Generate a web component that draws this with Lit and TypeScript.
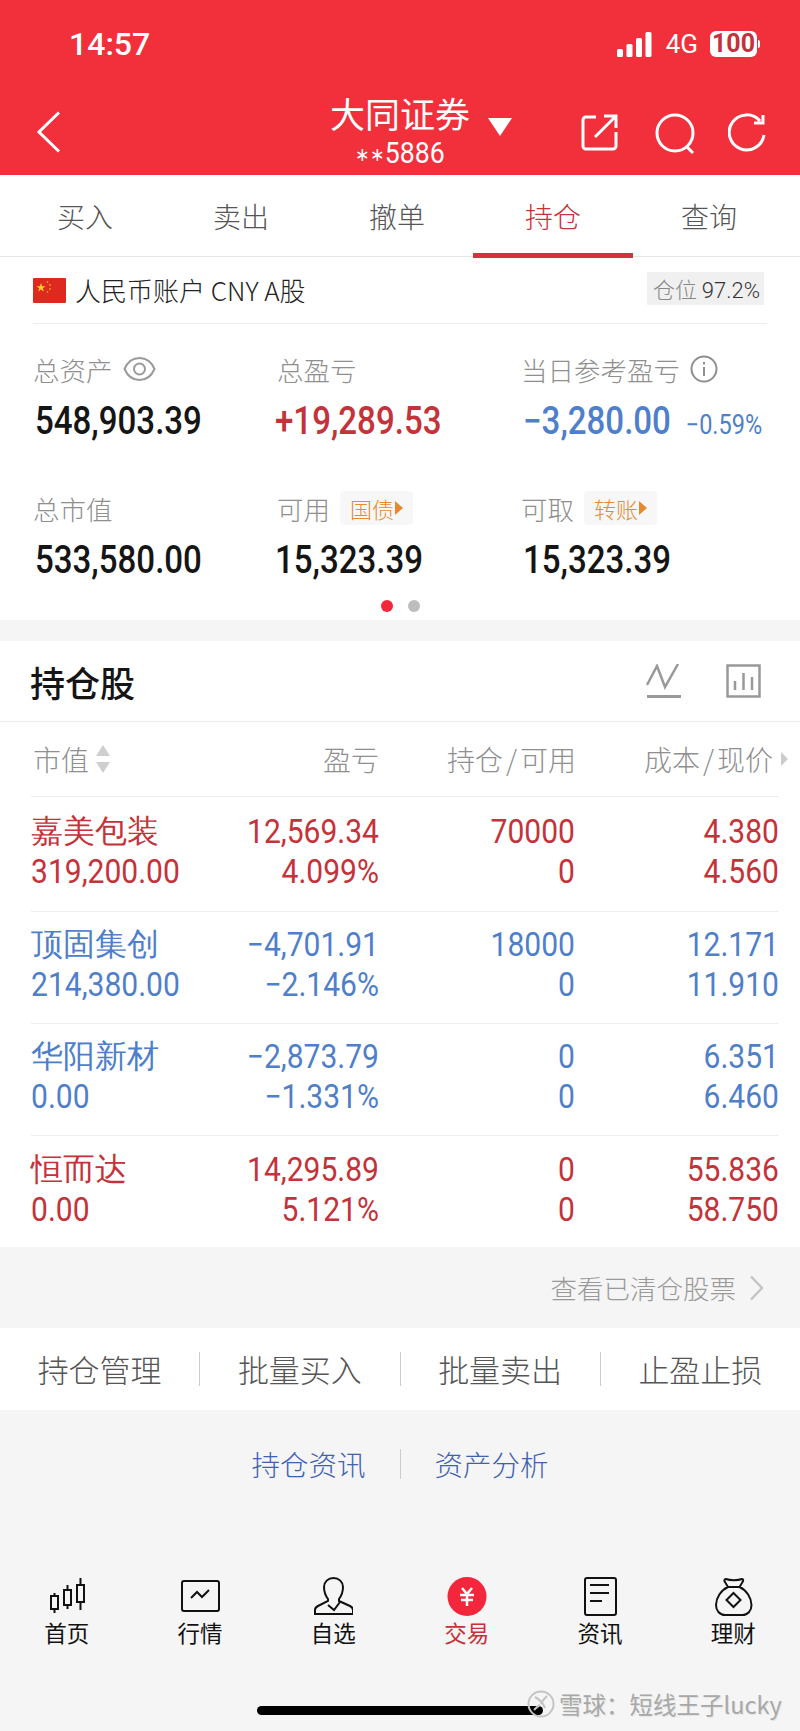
import { LitElement, html, css, svg } from 'lit';
import { customElement } from 'lit/decorators.js';

const tabs = ['买入', '卖出', '撤单', '持仓', '查询'];

const rows = [
  { c: 'up', name: '嘉美包装', mv: '319,200.00', pl: '12,569.34', pct: '4.099%', pos: '70000', avail: '0', cost: '4.380', now: '4.560' },
  { c: 'down', name: '顶固集创', mv: '214,380.00', pl: '−4,701.91', pct: '−2.146%', pos: '18000', avail: '0', cost: '12.171', now: '11.910' },
  { c: 'down', name: '华阳新材', mv: '0.00', pl: '−2,873.79', pct: '−1.331%', pos: '0', avail: '0', cost: '6.351', now: '6.460' },
  { c: 'up', name: '恒而达', mv: '0.00', pl: '14,295.89', pct: '5.121%', pos: '0', avail: '0', cost: '55.836', now: '58.750' },
];

const navIcons = [
  svg`<g fill="none" stroke="#111" stroke-width="2"><rect x="4" y="19" width="7" height="13" /><path d="M7.500 16v3M7.500 32v4" /><rect x="17" y="13" width="7" height="15" /><path d="M20.500 8v5M20.500 28v4" /><rect x="30" y="8" width="7" height="17" /><path d="M33.500 1v7M33.500 25v8" /></g>`,
  svg`<g fill="none" stroke="#111" stroke-width="2"><rect x="2" y="4" width="37" height="30" rx="2" /><path d="M11 21l6-6 5 5 7-7" /></g>`,
  svg`<g fill="none" stroke="#111" stroke-width="2"><path d="M15 22c-3-4-4-8-4-12 0-5 4-9 9.500-9s9.500 4 9.500 9c0 4-1 8-4 12v2l11 5c2 1 3 2 3 4v4H2v-4c0-2 1-3 3-4l10-5z" /><path d="M15 28l6 5 6-8" /></g>`,
  svg`<circle cx="20" cy="19.500" r="19.500" fill="#f3263c" /><g fill="none" stroke="#fff" stroke-width="2.500"><path d="M15 11l5 6 5-6M13 18h14M14 23h12M20 17v12" /></g>`,
  svg`<g fill="none" stroke="#111" stroke-width="2"><rect x="5" y="1" width="31" height="37" rx="2" /><path d="M10 8h19M10 16h19M10 24h12" /></g>`,
  svg`<g fill="none" stroke="#111" stroke-width="2"><path d="M13 2c4 1.500 12 1.500 16 0 1.500 0 1.500 2 .5 3l-3 5c7 3 12 11 12 18 0 6-4 10-9 10H12c-5 0-9-4-9-10 0-7 5-15 12-18l-3-5c-1-1-1-3 1-3z" /><path d="M15 10h12" /><path d="M20.500 16l7 7-7 7-7-7z" /></g>`,
];

const navLabels = ['首页', '行情', '自选', '交易', '资讯', '理财'];

@customElement('app-root')
export class AppRoot extends LitElement {
  static styles = css`
    :host {
      display: block;
      position: relative;
      min-height: 1731px;
      background: #f5f5f5;
      font-family: 'Noto Sans CJK SC', 'Noto Sans', sans-serif;
      color: #222;
      overflow: hidden;
    }
    .num {
      font-family: Roboto, 'Liberation Sans', sans-serif;
    }
    .up { color: #c4323a; }
    .down { color: #4f7fcb; }

    .head {
      background: #f1303c;
      height: 175px;
      color: #fff;
    }
    .status {
      height: 88px;
      display: flex;
      align-items: center;
      padding: 0 40px 0 69px;
      box-sizing: border-box;
    }
    .clock {
      font-family: Roboto, sans-serif;
      font-size: 32px;
      font-weight: 500;
      flex: 1;
    }
    .net {
      font-family: Roboto, sans-serif;
      font-size: 26px;
      margin: 0 12px 0 14px;
    }
    .batt {
      font-family: Roboto, sans-serif;
      font-size: 25px;
      font-weight: 700;
      line-height: 26px;
      height: 26px;
      width: 47px;
      text-align: center;
      background: #fff;
      color: #c4303c;
      border-radius: 6px;
    }
    .batt-tip {
      width: 2px;
      height: 8px;
      background: #fff;
      margin-left: 1px;
      border-radius: 0 2px 2px 0;
    }
    .nav {
      height: 87px;
      display: flex;
      align-items: flex-start;
      position: relative;
    }
    .back {
      margin: 23px 0 0 36px;
    }
    .title {
      position: absolute;
      left: 0;
      right: 0;
      top: 2px;
      text-align: center;
      line-height: 1;
    }
    .title b {
      display: block;
      font-weight: 400;
      font-size: 35px;
      height: 46px;
      line-height: 46px;
    }
    .acc {
      display: block;
      font-size: 29px;
      line-height: 28px;
      margin-top: 3px;
      transform: scaleX(0.92);
    }
    .acc i {
      font-style: normal;
      font-size: 19px;
      vertical-align: 2px;
    }
    .tri {
      position: absolute;
      left: 488px;
      top: 30px;
    }
    .actions {
      margin-left: auto;
      display: flex;
      gap: 31px;
      padding: 25px 34px 0 0;
    }
    .actions svg:first-child {
      margin-right: 6px;
    }

    .tabs {
      height: 82px;
      background: #fff;
      display: grid;
      grid-template-columns: repeat(5, 156px);
      padding-left: 7px;
      border-bottom: 1px solid #e6e6e6;
      box-sizing: border-box;
    }
    .tab {
      text-align: center;
      font-size: 28px;
      line-height: 82px;
      color: #555;
      position: relative;
      font-weight: 300;
    }
    .tab.on {
      color: #c4323a;
    }
    .tab.on::after {
      content: '';
      position: absolute;
      left: -2px;
      right: -2px;
      bottom: -1px;
      height: 5px;
      background: #d0343c;
    }

    .assets {
      background: #fff;
      height: 363px;
      padding: 0 33px;
      box-sizing: border-box;
    }
    .acct {
      height: 66px;
      display: flex;
      align-items: center;
      border-bottom: 1px solid #eee;
      font-size: 26px;
      color: #222;
      font-weight: 300;
    }
    .flag {
      margin-right: 9px;
      display: block;
    }
    .acct-name {
      flex: 1;
      margin-top: -2px;
    }
    .ratio {
      background: #f0f0f0;
      font-size: 22px;
      height: 33px;
      line-height: 33px;
      padding: 0 4px 0 6px;
      color: #888;
      margin: -4px 3px 0 0;
    }
    .ratio span {
      color: #333;
      font-family: Roboto, sans-serif;
    }
    .stats {
      display: grid;
      grid-template-columns: 244px 244px 1fr;
      grid-template-rows: 139px 112px;
      padding-top: 25px;
    }
    .label {
      display: flex;
      align-items: center;
      gap: 10px;
      height: 40px;
      font-size: 26.500px;
      color: #8f8f8f;
      font-weight: 300;
    }
    .value {
      font-size: 38px;
      font-weight: 500;
      line-height: 40px;
      margin-top: 12px;
      color: #151515;
      white-space: nowrap;
      transform: scaleX(0.87);
      transform-origin: 0 50%;
    }
    .stats > div:nth-child(3n + 1) .value,
    .stats > div:nth-child(3n) .value {
      margin-left: 2px;
    }
    .stats > div:nth-child(3n + 2) .value {
      margin-left: -2px;
    }
    .value.up { color: #c4323a; }
    .value.down { color: #4f7fcb; }
    .value small {
      font-size: 27px;
      font-weight: 400;
      margin-left: 17px;
    }
    .tag {
      background: #f7f7f7;
      color: #e58a2e;
      font-size: 22px;
      height: 34px;
      line-height: 34px;
      padding: 0 10px;
      border-radius: 4px;
      display: flex;
      align-items: center;
      gap: 1px;
    }
    .tag::after {
      content: '';
      border-left: 8px solid #e58a2e;
      border-top: 7px solid transparent;
      border-bottom: 7px solid transparent;
    }
    .dots {
      display: flex;
      justify-content: center;
      gap: 15px;
    }
    .dots i {
      width: 12px;
      height: 12px;
      border-radius: 50%;
      background: #bdbdbd;
    }
    .dots i.on {
      background: #f3263c;
    }

    .holdings {
      margin-top: 21px;
      background: #fff;
      height: 606px;
      overflow: hidden;
    }
    .hold-title {
      height: 81px;
      border-bottom: 1px solid #ececec;
      display: flex;
      align-items: center;
      padding: 0 39px 0 30px;
      box-sizing: border-box;
      gap: 44px;
    }
    .hold-title h2 {
      flex: 1;
      margin: 0;
      font-size: 35px;
      font-weight: 500;
      color: #151515;
    }
    .table {
      padding: 0 21px 0 31px;
    }
    .grid {
      display: grid;
      grid-template-columns: 190px 158px 196px 204px;
    }
    .thead {
      height: 74px;
      align-items: center;
      border-bottom: 1px solid #eee;
      font-size: 28px;
      color: #8f8f8f;
      font-weight: 300;
      padding-left: 2px;
      grid-template-columns: 188px 158px 197px 197px;
    }
    .thead > div {
      text-align: right;
      white-space: nowrap;
    }
    .thead > div:first-child {
      text-align: left;
      display: flex;
      align-items: center;
      gap: 6px;
    }
    .thead .more {
      position: relative;
    }
    .thead .more::after {
      content: '';
      position: absolute;
      right: -15px;
      top: 13px;
      border-left: 7px solid #ccc;
      border-top: 7px solid transparent;
      border-bottom: 7px solid transparent;
    }
    .sl {
      margin: 0 3px;
    }
    .sort {
      display: block;
    }
    .row {
      height: 112px;
      box-sizing: border-box;
      padding-bottom: 6px;
      border-bottom: 1px solid #eee;
      align-content: center;
      row-gap: 1px;
      font-size: 33px;
      line-height: 39px;
    }
    .thead + .row {
      height: 115px;
    }
    .row:last-child {
      border-bottom: 0;
    }
    .row > div {
      text-align: right;
      white-space: nowrap;
      transform: scaleX(0.91);
      transform-origin: 100% 50%;
    }
    .row > .name {
      text-align: left;
      font-size: 32px;
      font-weight: 300;
      transform: none;
    }
    .row > .left {
      text-align: left;
      transform-origin: 0 50%;
    }

    .cleared {
      height: 81px;
      display: flex;
      align-items: center;
      justify-content: flex-end;
      gap: 13px;
      padding-right: 36px;
      font-size: 26.500px;
      color: #999;
      font-weight: 300;
    }
    .tools {
      height: 82px;
      background: #fff;
      display: flex;
      align-items: center;
    }
    .tools div {
      flex: 1;
      text-align: center;
      font-size: 31px;
      line-height: 34px;
      color: #555;
      font-weight: 300;
      border-right: 1px solid #ccc;
    }
    .tools div:last-child {
      border-right: 0;
    }
    .links {
      height: 108px;
      display: flex;
      align-items: center;
      justify-content: center;
      font-size: 28.500px;
      color: #3f62b0;
      font-weight: 300;
    }
    .links span {
      padding: 0 34px;
      line-height: 30px;
    }
    .links span:first-child {
      border-right: 1px solid #ccc;
    }

    .bar {
      display: grid;
      grid-template-columns: repeat(6, 1fr);
      margin-top: 59px;
    }
    .bar div {
      display: flex;
      flex-direction: column;
      align-items: center;
      font-size: 22.500px;
      line-height: 30px;
      color: #111;
    }
    .bar svg {
      display: block;
    }
    .bar .on {
      color: #c4323a;
    }
    .home {
      position: absolute;
      left: 257px;
      top: 1706px;
      width: 286px;
      height: 9px;
      border-radius: 5px;
      background: #000;
    }
    .mark {
      position: absolute;
      left: 527px;
      top: 1689px;
      display: flex;
      align-items: center;
      gap: 4px;
      color: #a8a8a8;
      font-size: 23.500px;
      line-height: 30px;
      white-space: nowrap;
      text-shadow: 1px 1px 0 #e4e4e4;
    }
  `;

  renderStat(label: unknown, value: unknown, cls = '') {
    return html`<div>
      <div class="label">${label}</div>
      <div class="value num ${cls}">${value}</div>
    </div>`;
  }

  render() {
    return html`
      <div class="head">
        <div class="status">
          <div class="clock">14:57</div>
          <svg width="35" height="25" viewBox="0 0 35 25" fill="#fff">
            <rect x="0" y="17" width="6" height="8" rx="1.500" />
            <rect x="9.500" y="12" width="6" height="13" rx="1.500" />
            <rect x="19" y="6" width="6" height="19" rx="1.500" />
            <rect x="28.500" y="0" width="6" height="25" rx="1.500" />
          </svg>
          <span class="net">4G</span>
          <div class="batt">100</div>
          <div class="batt-tip"></div>
        </div>
        <div class="nav">
          <svg class="back" width="26" height="42" viewBox="0 0 26 42" fill="none" stroke="#fff" stroke-width="3">
            <path d="M23 1.500L3 21l20 19.500" />
          </svg>
          <div class="title">
            <b>大同证券</b>
            <span class="acc num"><i>∗∗</i>5886</span>
          </div>
          <svg class="tri" width="24" height="18" viewBox="0 0 24 18" fill="#fff"><path d="M0 0h24L12 18z" /></svg>
          <div class="actions">
            <svg width="37" height="38" viewBox="0 0 37 38" fill="none" stroke="#fff" stroke-width="3">
              <path d="M15 4H5a3 3 0 00-3 3v26a3 3 0 003 3h27a3 3 0 003-3V19" />
              <path d="M14 24L34 4M23 3h12v12" />
            </svg>
            <svg width="42" height="42" viewBox="0 0 42 42" fill="none" stroke="#fff" stroke-width="3">
              <circle cx="20" cy="20" r="18" />
              <path d="M31 33l7 7" />
            </svg>
            <svg width="38" height="40" viewBox="0 0 38 40" fill="none" stroke="#fff" stroke-width="3">
              <path d="M32 8A17.500 17.500 0 1036 22" />
              <path d="M35 2v8h-9" />
            </svg>
          </div>
        </div>
      </div>

      <div class="tabs">
        ${tabs.map((t) => html`<div class="tab ${t === '持仓' ? 'on' : ''}">${t}</div>`)}
      </div>

      <div class="assets">
        <div class="acct">
          <svg class="flag" width="33" height="25" viewBox="0 0 33 25">
            <rect width="33" height="25" rx="1" fill="#de2a1e" />
            <path d="M8 5l1.100 3.200h3.400l-2.700 2 1 3.300L8 11.500l-2.800 2 1-3.300-2.700-2h3.400z" fill="#f8d323" />
            <g fill="#f8d323"><circle cx="14.500" cy="4" r=".8" /><circle cx="17" cy="7" r=".8" /><circle cx="17" cy="11" r=".8" /><circle cx="14.500" cy="14" r=".8" /></g>
          </svg>
          <div class="acct-name">人民币账户 CNY A股</div>
          <div class="ratio">仓位 <span>97.2%</span></div>
        </div>
        <div class="stats">
          ${this.renderStat(html`总资产
            <svg width="33" height="26" viewBox="0 0 33 26" fill="none" stroke="#9a9a9a" stroke-width="2">
              <path d="M1.500 13C5 5 10 2 16.500 2s11.500 3 15 11c-3.500 8-8.500 11-15 11s-11.500-3-15-11z" /><circle cx="16.500" cy="13" r="5.500" />
            </svg>`, '548,903.39')}
          ${this.renderStat('总盈亏', '+19,289.53', 'up')}
          ${this.renderStat(html`当日参考盈亏
            <svg width="28" height="28" viewBox="0 0 28 28" fill="none" stroke="#8f8f8f" stroke-width="2">
              <circle cx="14" cy="14" r="12.500" /><path d="M14 12v9M14 7v2.500" />
            </svg>`, html`−3,280.00<small>−0.59%</small>`, 'down')}
          ${this.renderStat('总市值', '533,580.00')}
          ${this.renderStat(html`可用<span class="tag">国债</span>`, '15,323.39')}
          ${this.renderStat(html`可取<span class="tag">转账</span>`, '15,323.39')}
        </div>
        <div class="dots"><i class="on"></i><i></i></div>
      </div>

      <div class="holdings">
        <div class="hold-title">
          <h2>持仓股</h2>
          <svg width="36" height="34" viewBox="0 0 36 34" fill="none" stroke="#999" stroke-width="2.500">
            <path d="M1 21L11 2l8 21L32 0" /><path d="M1 32.500h34" stroke-width="3" />
          </svg>
          <svg width="35" height="34" viewBox="0 0 35 34" fill="none" stroke="#999" stroke-width="2.500">
            <rect x="1.500" y="1.500" width="32" height="31" /><path d="M9 26v-9M17.500 26V9M26 26V13" />
          </svg>
        </div>
        <div class="table">
          <div class="grid thead">
            <div>市值
              <svg class="sort" width="16" height="28" viewBox="0 0 16 28" fill="#cfcfcf"><path d="M8 0l7 11H1zM8 28L1 17h14z" /></svg>
            </div>
            <div>盈亏</div>
            <div>持仓<span class="sl">/</span>可用</div>
            <div><span class="more">成本<span class="sl">/</span>现价</span></div>
          </div>
          ${rows.map((r) => html`
            <div class="grid row num ${r.c}">
              <div class="name">${r.name}</div>
              <div>${r.pl}</div>
              <div>${r.pos}</div>
              <div>${r.cost}</div>
              <div class="left">${r.mv}</div>
              <div>${r.pct}</div>
              <div>${r.avail}</div>
              <div>${r.now}</div>
            </div>
          `)}
        </div>
      </div>

      <div class="cleared">
        查看已清仓股票
        <svg width="15" height="26" viewBox="0 0 15 26" fill="none" stroke="#c4c4c4" stroke-width="2.500"><path d="M2 1.500L13 13 2 24.500" /></svg>
      </div>
      <div class="tools">
        <div>持仓管理</div><div>批量买入</div><div>批量卖出</div><div>止盈止损</div>
      </div>
      <div class="links"><span>持仓资讯</span><span>资产分析</span></div>

      <div class="bar">
        ${navLabels.map((l, i) => html`<div class=${i === 3 ? 'on' : ''}>
          <svg width="40" height="40" viewBox="0 0 40 40">${navIcons[i]}</svg>
          ${l}
        </div>`)}
      </div>

      <div class="home"></div>
      <div class="mark">
        <svg width="28" height="28" viewBox="0 0 28 28" fill="none" stroke="#c4c4c4" stroke-width="2">
          <circle cx="14" cy="14" r="12.500" /><path d="M8 7c4 2 8 6 10 11M20 6c-3 3-5 5-6 8M7 20c2-2 4-4 6-5" />
        </svg>
        雪球：短线王子lucky
      </div>
    `;
  }
}
